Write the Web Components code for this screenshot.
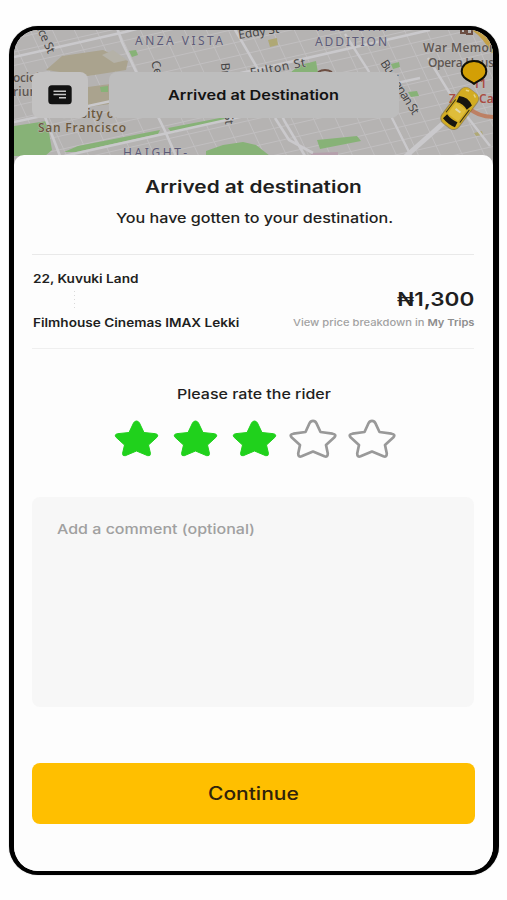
<!DOCTYPE html>
<html lang="en">
<head>
<meta charset="utf-8">
<title>Arrived at destination</title>
<style>
html,body{margin:0;height:100%;background:#fefefe}
body{font-family:Inter,"Liberation Sans",sans-serif;color:#1f1f21;overflow:hidden}
</style>
</head>
<body>
<ride-screen></ride-screen>
<script>
const define=(name,html,setup)=>customElements.define(name,class extends HTMLElement{
  constructor(){super();this.attachShadow({mode:'open'}).innerHTML=html;}
  connectedCallback(){if(setup)setup(this,this.shadowRoot);}
});

/* One line of text, stretched horizontally to the width given in pixels. */
define('fit-label',`<style>:host{display:block;white-space:nowrap;flex:none}span{display:inline-block;transform-origin:0 50%}</style><span><slot></slot></span>`,(el,root)=>{
  const w=+el.getAttribute('width'),s=root.querySelector('span');
  el.style.width=w+'px';
  requestAnimationFrame(()=>{s.style.transform='scaleX('+w/s.offsetWidth+')';});
});

define('city-map',`<style>
:host{display:block;width:479px;height:140px}
svg{display:block}
.l{font-family:"Noto Sans","Open Sans",sans-serif;font-size:12px;stroke:#bcbab9;stroke-width:1px;paint-order:stroke}
.b{font-weight:600;font-family:"Open Sans",sans-serif;font-size:12px}
</style>
<svg width="479" height="140" viewBox="14 30 479 140">
<rect x="14" y="30" width="479" height="140" fill="#b5b3b2"/>
<g id="grid" fill="none" stroke="#c1bfc0" stroke-width="1"></g>
<path d="M46 70 62 56 103 50 128 61 126 70 88 76ZM88 87 110 84V104L88 107Z" fill="#aaa38e"/>
<path d="M102 55 113 50 127 60 114 63Z" fill="#b5b2a8"/>
<path d="M14 126 47 121 52 150 45 156H14ZM64 152 78 146 160 130 158 134 76 152ZM168 128 225 117 231 119 172 133ZM206 151 223 145 243 142 256 145 270 156H206ZM317 140 357 136 361 141 320 149ZM291 72 300 65 316 61 318 73ZM129 51 136 50 138 55 132 57ZM100 87 108 86V92H101ZM391 64 399 62 400 67 393 69ZM408 92 417 91 419 96 411 97Z" fill="#87b277"/>
<path d="M268 40 277 38 278 45 270 47ZM474 133 482 131 483 135 476 136Z" fill="#afa875"/>
<path d="M311 153 338 152V156H311Z" fill="#b5a0ac"/>
<g fill="none" stroke="#cac9cc">
<path d="M117 28 122 42 140 80 165 131 176 156M14 57 125 32 140 28M45 117 60 156M14 122 250 71 430 30M234 28 262 76 285 122 305 156M275 118 289 140 313 153" stroke-width="2.600"/>
<path d="M64 156 240 117 420 78M345 34 368 70 411 156M428 58 452 97 490 146" stroke-width="2.4"/>
<path d="M405 157 448 119" stroke-width="5"/>
</g>
<path d="M474 28Q486 36 494 52" stroke="#c4a047" stroke-width="6" fill="none"/>
<path d="M469 108Q478 117 495 117" stroke="#bd8064" stroke-width="4" fill="none"/>
<g class="l" fill="#5c5b78">
<text x="135" y="44.500" textLength="88">ANZA VISTA</text>
<text x="315" y="31" textLength="72">WESTERN</text>
<text x="315" y="46" textLength="72">ADDITION</text>
<text x="123" y="157" textLength="64">HAIGHT-</text>
</g>
<g class="l" fill="#454444">
<text transform="translate(35 25) rotate(66)" textLength="32">uce St</text>
<text transform="translate(239 39) rotate(-9)" textLength="41">Eddy St</text>
<text transform="translate(251 77) rotate(-11)" textLength="56">Fulton St</text>
<text transform="translate(151 62) rotate(74)">Central</text>
<text transform="translate(221 63) rotate(86)" textLength="62">Brodrick St</text>
<text transform="translate(380 63) rotate(58)" textLength="62">Buchanan St</text>
</g>
<g class="l b" fill="#5e5651">
<text x="13" y="81.500" textLength="46">ociology</text><text x="13" y="96" textLength="28">rium</text>
<text x="423" y="52" textLength="75">War Memori</text><text x="428" y="66.500" textLength="66">Opera Hous</text>
</g>
<g class="l b" fill="#6b583d">
<text x="61" y="118" textLength="58">versity of</text><text x="38" y="132" textLength="88">San Francisco</text>
</g>
<path d="M318 72q7-4 14 0M461 29h4v4h-4zM467 29h5v5h-5z" stroke="#6c4e42" stroke-width="2" fill="none"/>
<g class="l" fill="#a94c42" style="font-weight:600"><text x="449" y="103">Z</text><text x="479" y="103">Ca</text><text x="473" y="88">11</text></g>
</svg>`,(el,root)=>{
  let d='';
  for(let y=25;y<275;y+=13.5)d+=`M14 ${y}L493 ${y-108}`;
  for(let x=-60;x<490;x+=22)d+=`M${x} 25l65 140`;
  root.querySelector('#grid').innerHTML=`<path d="${d}"/>`;
});

define('taxi-marker',`<style>:host{display:block;width:60px;height:76px}svg{display:block}</style>
<svg width="60" height="76" viewBox="433 56 60 76">
<path d="M474 61C481.200 61 486.300 65.700 486.300 71.500C486.300 77.500 480.500 79.500 474 83.800C467.500 79.500 461.700 77.500 461.700 71.500C461.700 65.700 466.800 61 474 61Z" fill="#d39f05" stroke="#111006" stroke-width="2"/>
<g transform="translate(459.500 108.700) rotate(37)">
<rect x="-11" y="-22.500" width="22" height="44.500" rx="7" fill="#8b7226" opacity=".65"/>
<rect x="-10" y="-22" width="20" height="43" rx="6" fill="#d2ac22"/>
<path d="M-8-10Q0-15 8-10L6.500-3.500Q0-6.500-6.500-3.500ZM-6.500 12Q0 14 6.500 12L7.500 17.500Q0 19.500-7.500 17.500Z" fill="#17150f"/>
<path d="M-8.600-5V11M8.600-5V11" stroke="#3a3214" stroke-width="1"/>
<rect x="-6.500" y="-3" width="13" height="14" rx="1.500" fill="#dfbd3a"/>
<path d="M-3 2.500H3" stroke="#dfd8ab" stroke-width="2"/>
<path d="M-6-18.500-3-20M6-18.500 3-20" stroke="#e7d384" stroke-width="1.500"/>
</g></svg>`);

define('menu-button',`<style>:host{display:flex;align-items:center;justify-content:center;width:56px;height:46px;border-radius:8px;background:#c3c2c2}</style>
<svg width="24" height="20" viewBox="0 0 24 20"><rect x=".3" y=".3" width="23.400" height="19" rx="3.500" fill="#121212"/><path d="M5.500 6.300H18M5.500 9.500H18M11 12.800H18" stroke="#c7c7c7" stroke-width="1.500"/></svg>`);

define('map-title',`<style>:host{display:flex;align-items:center;justify-content:center;box-sizing:border-box;width:290px;height:46px;border-radius:8px;background:#bdbdbd;font-size:13.500px;font-weight:600;color:#131313;padding:0 2px 1px 0}</style><slot></slot>`);

define('rate-star',`<style>:host{display:block;width:48px;height:42px}svg{display:block}path{fill:none;stroke:#999;stroke-width:2.700;stroke-linejoin:round}:host([on]) path{fill:#20d11c;stroke:#20d11c;stroke-width:1}</style>
<svg width="48" height="42" viewBox="0 0 48 42"><path/></svg>`,(el,root)=>{
  root.querySelector('path').setAttribute('d',el.hasAttribute('on')
  ?'M24.500 2Q26.400 2 27.500 4L32 13.500 43.500 14.700Q47.200 15.600 44.800 18.400L36.500 26 38.500 34.600Q38.500 37.400 35.700 36.700L24.500 32 13.300 36.700Q10.500 37.400 10.500 34.600L12.500 26 4.200 18.400Q1.800 15.600 5.500 14.700L17 13.500 21.500 4Q22.600 2 24.500 2Z'
  :'M24 1.800Q26.300 1.800 27.500 4.300L31.500 13 43.500 14.700Q48 15.600 45.200 18.600L37 26 38.800 34.500Q38.800 38.400 35.400 37.300L24 32.500 12.600 37.300Q9.200 38.400 9.200 34.500L11 26 2.800 18.600Q0 15.600 4.500 14.700L16.500 13 20.500 4.300Q21.700 1.800 24 1.800Z');
});

define('star-rating',`<style>:host{display:flex;gap:10.800px;justify-content:center;padding-left:2px}</style><slot></slot>`);

define('trip-summary',`<style>
:host{display:flex;justify-content:space-between;box-sizing:border-box;height:95px;border-top:1.500px solid #e9e9e9;border-bottom:1.500px solid #efefef;padding:16px 0 0 1px}
.stops{display:flex;flex-direction:column;font-size:11.700px;font-weight:600;line-height:16px}
.dots{height:28px;width:1px;margin-left:41px;display:flex;align-items:center}
.dots i{width:1px;height:20px;background:repeating-linear-gradient(#d9d9d9 0 1px,transparent 1px 4px)}
.price{display:flex;flex-direction:column;align-items:flex-end}
.sum{font-size:19px;font-weight:600;line-height:24px;margin-top:17px}
.more{font-size:9.500px;font-weight:500;line-height:14px;color:#a2a2a2;margin-top:4px}
b{font-weight:600;color:#8e8e8e}
</style>
<div class="stops"><fit-label width="105">22, Kuvuki Land</fit-label><div class="dots"><i></i></div><fit-label width="206">Filmhouse Cinemas IMAX Lekki</fit-label></div>
<div class="price"><fit-label class="sum" width="77">₦1,300</fit-label><fit-label class="more" width="181">View price breakdown in <b>My Trips</b></fit-label></div>`);

define('comment-box',`<style>:host{display:block;box-sizing:border-box;height:210px;border-radius:8px;background:#f7f7f7;padding:21.500px 25px;font-size:13.500px;font-weight:500;line-height:20px;color:#a0a0a0}</style><slot></slot>`);

define('primary-button',`<style>:host{display:flex;align-items:center;justify-content:center;height:61px;border-radius:8px;background:#ffbf00;color:#30230b;font-size:18px;font-weight:500;box-sizing:border-box;padding:0 1px 1px 0}</style><slot></slot>`);

define('bottom-sheet',`<style>
:host{display:flex;flex-direction:column;box-sizing:border-box;height:717px;background:#fdfdfd;border-radius:10px 10px 0 0;padding:20px 19px 0 18px}
.c{display:flex;justify-content:center}
.title{font-size:16.800px;font-weight:600;line-height:24px}
.sub{font-size:13.500px;font-weight:450;line-height:20px;margin-top:9px;padding-left:2px}
trip-summary{margin-top:26px}
.ask{font-size:13.500px;font-weight:450;line-height:20px;margin-top:34.500px;padding-left:1px}
star-rating{margin-top:15px}
comment-box{margin-top:36.500px}
primary-button{margin-top:56px;margin-right:-1px}
</style>
<div class="c title"><fit-label width="217">Arrived at destination</fit-label></div>
<div class="c sub"><fit-label width="277">You have gotten to your destination.</fit-label></div>
<trip-summary></trip-summary>
<div class="c ask"><fit-label width="154">Please rate the rider</fit-label></div>
<star-rating><rate-star on></rate-star><rate-star on></rate-star><rate-star on></rate-star><rate-star></rate-star><rate-star></rate-star></star-rating>
<comment-box><fit-label width="198">Add a comment (optional)</fit-label></comment-box>
<primary-button><fit-label width="91">Continue</fit-label></primary-button>`);

define('ride-screen',`<style>
:host{display:block;padding:26px 0 0 9px}
.phone{position:relative;box-sizing:border-box;width:490px;height:849px;border:solid #000;border-width:4px 6px 4px 5px;border-radius:29px;overflow:hidden;background:#fdfdfd;box-shadow:0 0 1px #777}
city-map{position:absolute;left:0;top:0}
taxi-marker{position:absolute;left:419px;top:26px}
.content{position:relative;display:flex;flex-direction:column}
.bar{display:flex;gap:21px;padding:42px 18px 37px}
</style>
<div class="phone"><city-map></city-map><div class="content"><div class="bar"><menu-button></menu-button><map-title><fit-label width="171">Arrived at Destination</fit-label></map-title></div><bottom-sheet></bottom-sheet></div><taxi-marker></taxi-marker></div>`);
</script>
</body>
</html>
